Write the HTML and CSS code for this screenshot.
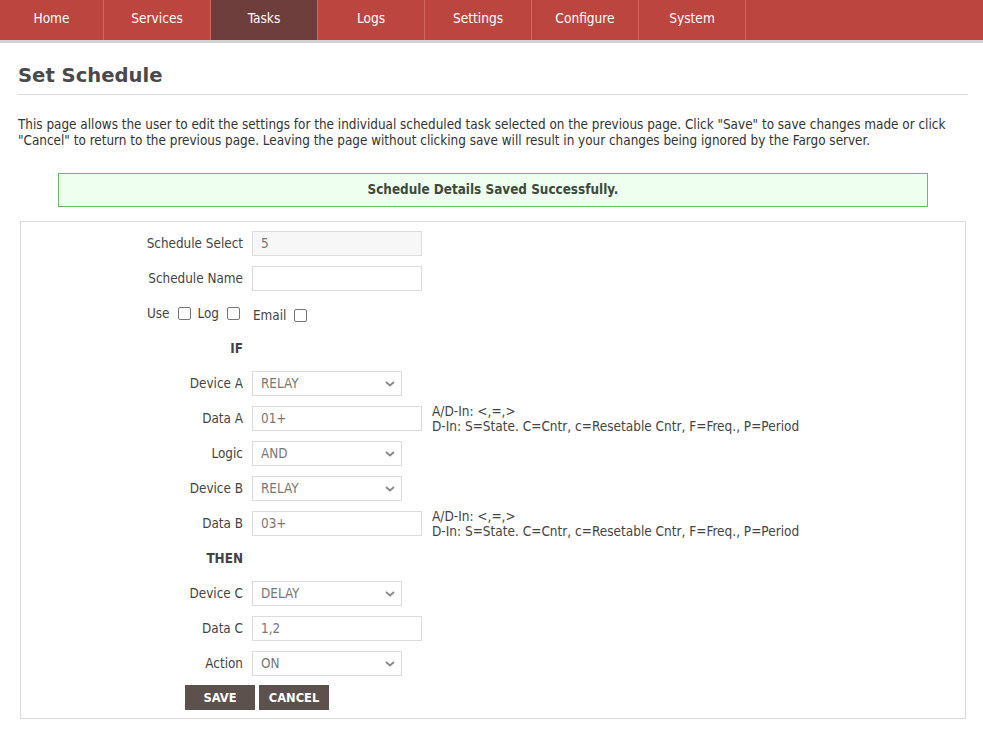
FILE: index.html
```html
<!DOCTYPE html>
<html>
<head>
<meta charset="utf-8">
<title>Set Schedule</title>
<link rel="stylesheet" href="styles.css">
</head>
<body>
<nav class="topnav">
  <a class="nav-item first" href="#">Home</a>
  <a class="nav-item" href="#">Services</a>
  <a class="nav-item active" href="#">Tasks</a>
  <a class="nav-item" href="#">Logs</a>
  <a class="nav-item" href="#">Settings</a>
  <a class="nav-item" href="#">Configure</a>
  <a class="nav-item" href="#">System</a>
</nav>
<main class="content">
  <h1 class="title">Set Schedule</h1>
  <p class="intro">This page allows the user to edit the settings for the individual scheduled task selected on the previous page. Click "Save" to save changes made or click "Cancel" to return to the previous page. Leaving the page without clicking save will result in your changes being ignored by the Fargo server.</p>
  <div class="success">Schedule Details Saved Successfully.</div>
  <form class="form-box">
    <div class="row">
      <label class="lbl">Schedule Select</label>
      <input class="field readonly" type="text" value="5" readonly>
    </div>
    <div class="row">
      <label class="lbl">Schedule Name</label>
      <input class="field" type="text" value="">
    </div>
    <div class="row checks">
      <div class="lbl">
        <span>Use</span><span class="cb"></span>
        <span>Log</span><span class="cb"></span>
      </div>
      <div class="check-right"><span>Email</span><span class="cb"></span></div>
    </div>
    <div class="row">
      <div class="lbl bold">IF</div>
    </div>
    <div class="row">
      <label class="lbl">Device A</label>
      <div class="sel"><span>RELAY</span><svg class="chev" width="10" height="6" viewBox="0 0 10 6"><path d="M1 1 L5 4.5 L9 1" fill="none" stroke="#888" stroke-width="1.8"/></svg></div>
    </div>
    <div class="row">
      <label class="lbl">Data A</label>
      <input class="field" type="text" value="01+">
      <div class="help">A/D-In: &lt;,=,&gt;<br>D-In: S=State. C=Cntr, c=Resetable Cntr, F=Freq., P=Period</div>
    </div>
    <div class="row">
      <label class="lbl">Logic</label>
      <div class="sel"><span>AND</span><svg class="chev" width="10" height="6" viewBox="0 0 10 6"><path d="M1 1 L5 4.5 L9 1" fill="none" stroke="#888" stroke-width="1.8"/></svg></div>
    </div>
    <div class="row">
      <label class="lbl">Device B</label>
      <div class="sel"><span>RELAY</span><svg class="chev" width="10" height="6" viewBox="0 0 10 6"><path d="M1 1 L5 4.5 L9 1" fill="none" stroke="#888" stroke-width="1.8"/></svg></div>
    </div>
    <div class="row">
      <label class="lbl">Data B</label>
      <input class="field" type="text" value="03+">
      <div class="help">A/D-In: &lt;,=,&gt;<br>D-In: S=State. C=Cntr, c=Resetable Cntr, F=Freq., P=Period</div>
    </div>
    <div class="row">
      <div class="lbl bold">THEN</div>
    </div>
    <div class="row">
      <label class="lbl">Device C</label>
      <div class="sel"><span>DELAY</span><svg class="chev" width="10" height="6" viewBox="0 0 10 6"><path d="M1 1 L5 4.5 L9 1" fill="none" stroke="#888" stroke-width="1.8"/></svg></div>
    </div>
    <div class="row">
      <label class="lbl">Data C</label>
      <input class="field" type="text" value="1,2">
    </div>
    <div class="row">
      <label class="lbl">Action</label>
      <div class="sel"><span>ON</span><svg class="chev" width="10" height="6" viewBox="0 0 10 6"><path d="M1 1 L5 4.5 L9 1" fill="none" stroke="#888" stroke-width="1.8"/></svg></div>
    </div>
    <div class="buttons">
      <button class="btn" type="button">SAVE</button>
      <button class="btn" type="button">CANCEL</button>
    </div>
  </form>
</main>
</body>
</html>
```
FILE: styles.css
```css
* { box-sizing: border-box; }
body {
  margin: 0;
  font-family: "DejaVu Sans Condensed", "DejaVu Sans", sans-serif;
  font-size: 13.4px;
  color: #444;
  background: #fff;
}
.topnav {
  display: flex;
  height: 43px;
  background: #bc4540;
  border-bottom: 3px solid #d2d2d2;
}
.nav-item {
  width: 107px;
  height: 40px;
  line-height: 37px;
  text-align: center;
  color: #fff;
  text-decoration: none;
  border-right: 1px solid #d0665f;
  font-size: 13.6px;
}
.nav-item.first { width: 104px; }
.nav-item.active { background: #6e3e3c; }
.content {
  padding: 0 15px 0 18px;
}
.title {
  margin: 21px 0 0;
  padding-bottom: 6px;
  font-family: "DejaVu Sans", sans-serif;
  font-size: 19.6px;
  line-height: 24px;
  font-weight: bold;
  color: #4a4a4a;
  border-bottom: 1px solid #dcdcdc;
}
.intro {
  margin: 22px 0 0;
  line-height: 16px;
  color: #333;
}
.success {
  margin: 24px 40px 0;
  height: 34px;
  line-height: 31px;
  text-align: center;
  font-weight: bold;
  color: #3d4a3d;
  background: #efffef;
  border: 1px solid #66bb66;
}
.form-box {
  margin: 14px 2px 0;
  padding: 9px 0 7px;
  border: 1px solid #dcdcdc;
  height: 498px;
}
.row {
  display: flex;
  align-items: center;
  height: 25px;
  margin-bottom: 10px;
}
.lbl {
  width: 222px;
  text-align: right;
  margin-right: 9px;
  color: #444;
  flex-shrink: 0;
}
.lbl.bold { font-weight: bold; }
.field {
  width: 170px;
  height: 25px;
  border: 1px solid #dcdcdc;
  padding: 0 8px;
  font-family: inherit;
  font-size: 13.4px;
  color: #777;
  background: #fff;
  outline: none;
}
.field.readonly { background: #f7f7f7; }
.sel {
  position: relative;
  width: 150px;
  height: 25px;
  border: 1px solid #dcdcdc;
  padding: 0 8px;
  line-height: 23px;
  color: #777;
  background: #fff;
}
.chev {
  position: absolute;
  right: 6px;
  top: 9px;
}
.help {
  margin-left: 10px;
  line-height: 15px;
  color: #444;
  margin-top: 0;
  font-size: 13.5px;
}
.checks .lbl {
  display: flex;
  justify-content: flex-end;
  align-items: center;
}
.cb {
  display: inline-block;
  width: 13px;
  height: 13px;
  border: 1px solid #767676;
  border-radius: 2px;
  margin: 0 7px 0 8px;
  background: #fff;
}
.checks .lbl .cb:last-child { margin-right: 3px; }
.check-right {
  display: flex;
  align-items: center;
  margin-left: 1px;
  padding-top: 3px;
}
.buttons {
  display: flex;
  gap: 4px;
  padding-left: 164px;
  margin-top: -1px;
}
.btn {
  width: 70px;
  height: 25px;
  border: none;
  background: #5c514d;
  color: #fff;
  font-family: "DejaVu Sans", sans-serif;
  font-weight: bold;
  font-size: 11.5px;
  padding: 0;
}
```
